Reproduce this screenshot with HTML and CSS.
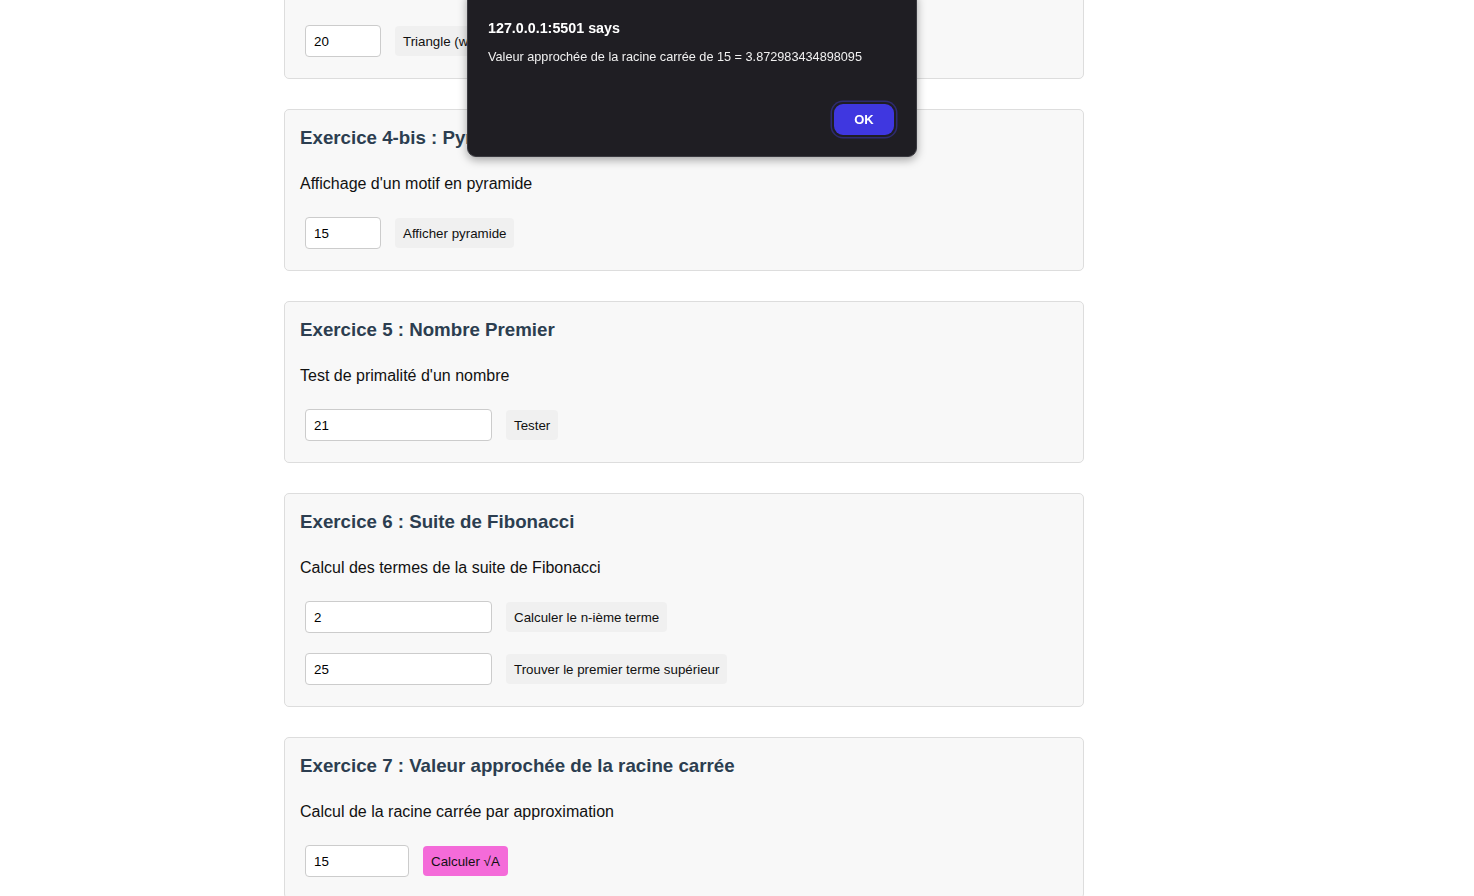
FILE: index.html
```html
<!DOCTYPE html>
<html lang="fr">
<head>
<meta charset="utf-8">
<title>Exercices</title>
<link rel="stylesheet" href="styles.css">
</head>
<body>
<main class="page">
  <section class="card">
    <h3 class="card-title">Exercice 4 : Triangle</h3>
    <p class="card-desc">Affichage d'un motif en triangle</p>
    <div class="rows">
      <div class="row"><input class="field field-s" type="text" value="20"><button class="btn">Triangle (while)</button></div>
    </div>
  </section>

  <section class="card">
    <h3 class="card-title">Exercice 4-bis : Pyramide</h3>
    <p class="card-desc">Affichage d'un motif en pyramide</p>
    <div class="rows">
      <div class="row"><input class="field field-s" type="text" value="15"><button class="btn">Afficher pyramide</button></div>
    </div>
  </section>

  <section class="card">
    <h3 class="card-title">Exercice 5 : Nombre Premier</h3>
    <p class="card-desc">Test de primalité d'un nombre</p>
    <div class="rows">
      <div class="row"><input class="field field-l" type="text" value="21"><button class="btn">Tester</button></div>
    </div>
  </section>

  <section class="card">
    <h3 class="card-title">Exercice 6 : Suite de Fibonacci</h3>
    <p class="card-desc">Calcul des termes de la suite de Fibonacci</p>
    <div class="rows">
      <div class="row"><input class="field field-l" type="text" value="2"><button class="btn">Calculer le n-ième terme</button></div>
      <div class="row"><input class="field field-l" type="text" value="25"><button class="btn">Trouver le premier terme supérieur</button></div>
    </div>
  </section>

  <section class="card">
    <h3 class="card-title">Exercice 7 : Valeur approchée de la racine carrée</h3>
    <p class="card-desc">Calcul de la racine carrée par approximation</p>
    <div class="rows">
      <div class="row"><input class="field field-m" type="text" value="15"><button class="btn btn-pink">Calculer √A</button></div>
    </div>
  </section>
</main>

<div class="dialog" role="alertdialog">
  <div class="dialog-title">127.0.0.1:5501 says</div>
  <div class="dialog-msg">Valeur approchée de la racine carrée de 15 = 3.872983434898095</div>
  <div class="dialog-actions"><button class="dialog-ok">OK</button></div>
</div>
</body>
</html>
```

FILE: styles.css
```css
html, body {
  margin: 0;
  padding: 0;
  background: #ffffff;
  font-family: "Liberation Sans", Arial, sans-serif;
  color: #111;
  overflow: hidden;
}

.page {
  width: 800px;
  margin: -83px 0 0 284px;
  display: flex;
  flex-direction: column;
  gap: 30px;
}

.card {
  box-sizing: border-box;
  width: 800px;
  background: #f8f8f8;
  border: 1px solid #dddddd;
  border-radius: 5px;
  padding: 15px 15px 16px 15px;
}

.card-title {
  margin: 0;
  font-size: 18.72px;
  line-height: 26px;
  font-weight: bold;
  color: #2c3e50;
}

.card-desc {
  margin: 23px 0 0 0;
  font-size: 16px;
  line-height: 20px;
  color: #111;
}

.rows {
  margin-top: 18px;
  display: flex;
  flex-direction: column;
  gap: 10px;
}

.row {
  display: flex;
  align-items: center;
  padding: 5px;
}

.field {
  box-sizing: border-box;
  height: 32px;
  padding: 0 8px;
  border: 1px solid #cccccc;
  border-radius: 4px;
  background: #fff;
  font-family: "Liberation Sans", Arial, sans-serif;
  font-size: 13.33px;
  color: #000;
  margin-right: 14px;
}

.field-s { width: 76px; }
.field-m { width: 104px; }
.field-l { width: 187px; }

.btn {
  box-sizing: border-box;
  height: 30px;
  padding: 0 8px;
  border: none;
  border-radius: 4px;
  background: #f0f0f0;
  font-family: "Liberation Sans", Arial, sans-serif;
  font-size: 13.33px;
  color: #111;
}

.btn-pink {
  background: #f46bd9;
}

.dialog {
  position: fixed;
  left: 467px;
  top: -10px;
  width: 450px;
  height: 167px;
  box-sizing: border-box;
  background: #1f1e23;
  border: 1px solid #3a3a40;
  border-radius: 9px;
  box-shadow: 0 3px 10px rgba(0, 0, 0, 0.35);
  padding: 27px 20px 0 20px;
  color: #fff;
  font-family: "Liberation Sans", Arial, sans-serif;
}

.dialog-title {
  font-size: 14.3px;
  font-weight: bold;
  line-height: 20px;
}

.dialog-msg {
  margin-top: 10px;
  font-size: 12.7px;
  line-height: 18px;
  color: #f0f0f0;
}

.dialog-actions {
  display: flex;
  justify-content: flex-end;
  margin-top: 38px;
}

.dialog-ok {
  box-sizing: border-box;
  width: 60px;
  height: 31px;
  margin-right: 2px;
  border: none;
  border-radius: 9px;
  background: #3f37e0;
  box-shadow: 0 0 0 2px #1f1e23, 0 0 0 3.5px #2e2b70;
  color: #fff;
  font-family: "Liberation Sans", Arial, sans-serif;
  font-size: 13px;
  font-weight: bold;
}
```
